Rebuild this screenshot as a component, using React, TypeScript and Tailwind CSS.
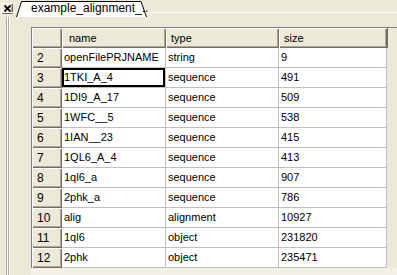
import React from 'react';

const rows = [
  { n: 2, name: 'openFilePRJNAME', type: 'string', size: '9' },
  { n: 3, name: '1TKI_A_4', type: 'sequence', size: '491' },
  { n: 4, name: '1DI9_A_17', type: 'sequence', size: '509' },
  { n: 5, name: '1WFC__5', type: 'sequence', size: '538' },
  { n: 6, name: '1IAN__23', type: 'sequence', size: '415' },
  { n: 7, name: '1QL6_A_4', type: 'sequence', size: '413' },
  { n: 8, name: '1ql6_a', type: 'sequence', size: '907' },
  { n: 9, name: '2phk_a', type: 'sequence', size: '786' },
  { n: 10, name: 'alig', type: 'alignment', size: '10927' },
  { n: 11, name: '1ql6', type: 'object', size: '231820' },
  { n: 12, name: '2phk', type: 'object', size: '235471' },
];

const bevel =
  'bg-[#ece9d8] shadow-[inset_1px_1px_0_#ffffff,inset_-1px_-1px_0_#716f64,inset_-2px_-2px_0_#aca899]';

const App = () => {
  return (
    <div className="w-[397px] h-[275px] bg-[#ece9d8] flex flex-col overflow-hidden font-['Liberation_Sans',Arial,sans-serif] text-[11px] text-black">
      {/* Tab strip */}
      <div className="h-[17px] flex relative shrink-0">
        <div className="absolute left-0 right-0 top-[12px] h-px bg-white" />
        <div className={`mt-[3px] ml-[1px] w-[12px] h-[11px] flex items-center justify-center ${bevel}`}>
          <svg width="7" height="7" viewBox="0 0 7 7">
            <path d="M0.5 0.5 L6.5 6.5 M6.5 0.5 L0.5 6.5" stroke="#000" strokeWidth="1.8" />
          </svg>
        </div>
        <div className="relative ml-[3px] mt-[1px] w-[134px] h-[16px]">
          <svg className="absolute inset-0" width="134" height="16" viewBox="0 0 134 16">
            <path d="M0 16 L5 0.5 L125 0.5 L130 16 Z" fill="#ffffff" />
            <path d="M0.5 16 L5.5 0.5 L125 0.5 L130.5 16" fill="none" stroke="#000" strokeWidth="1" />
          </svg>
          <span className="relative block pl-[15px] pt-[1px] leading-[13px] text-[12px]">example_alignment_..</span>
        </div>
      </div>

      <div className="flex flex-1 min-h-0">
        {/* left gutter */}
        <div className="w-[31px] shrink-0 flex pl-[6px]">
          <div className="w-px bg-[#aca899]" />
          <div className="w-px bg-white" />
          <div className="w-px bg-[#aca899]" />
          <div className="w-px bg-white" />
        </div>

        <div className="flex-1 flex flex-col pt-[10px]">
          <div className="border-t border-l border-[#808080] flex flex-col">
            {/* header */}
            <div className="flex h-[20px]">
              <div className={`w-[30px] ${bevel}`} />
              <div className={`w-[104px] pl-[7px] flex items-center ${bevel}`}>name</div>
              <div className={`w-[113px] pl-[5px] flex items-center ${bevel}`}>type</div>
              <div className={`w-[108px] pl-[5px] flex items-center ${bevel}`}>size</div>
              <div className="flex-1 bg-[#ece9d8] border-l border-[#716f64]" />
            </div>
            {rows.map((r) => (
              <div key={r.n} className="flex h-[20px]">
                <div className={`w-[30px] pl-[5px] flex items-center text-[12px] ${bevel}`}>{r.n}</div>
                <div
                  className={`w-[104px] pl-[2px] flex items-center bg-white border-r border-b border-[#c0c0c0] ${
                    r.n === 3 ? 'shadow-[inset_0_0_0_2px_#000]' : ''
                  }`}
                >
                  {r.name}
                </div>
                <div className="w-[113px] pl-[2px] flex items-center bg-white border-r border-b border-[#c0c0c0]">{r.type}</div>
                <div className="w-[108px] pl-[2px] flex items-center bg-white border-r border-b border-[#c0c0c0]">{r.size}</div>
              </div>
            ))}
          </div>
          <div className="flex-1 bg-[#f3f1e7]" />
        </div>
      </div>
    </div>
  );
};

export default App;
